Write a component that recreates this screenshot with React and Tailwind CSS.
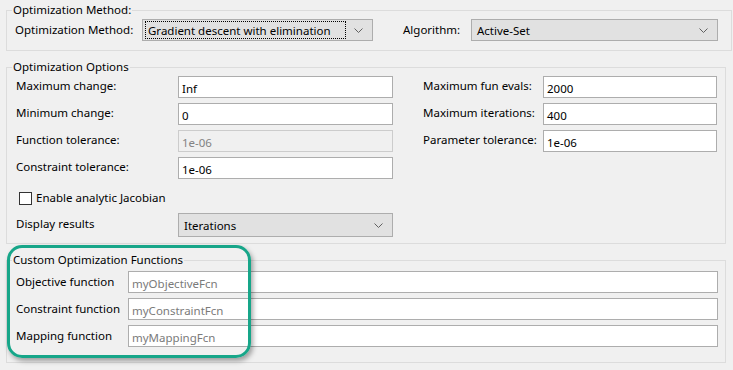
import React from 'react'

function Chevron() {
  return (
    <svg width="9" height="5" viewBox="0 0 9 5" className="shrink-0">
      <path d="M0.5 0.5 L4.5 4.5 L8.5 0.5" fill="none" stroke="#606060" strokeWidth="1" />
    </svg>
  )
}

function Combo({ value, width, focused = false }) {
  return (
    <div className={`flex h-[22px] ${width} items-center border border-[#adadad] bg-[#e1e1e1] pl-[2px] pr-[9px]`}>
      <div
        className={`flex h-[18px] flex-1 items-center pl-[2px] pt-px ${
          focused ? 'border border-dotted border-black' : 'border border-transparent'
        }`}
      >
        {value}
      </div>
      <div className="ml-[8px]">
        <Chevron />
      </div>
    </div>
  )
}

function Field({ value, width, disabled = false, muted = false }) {
  return (
    <div
      className={`flex h-[22px] ${width} items-center border px-[3px] pt-[3px] ${
        disabled ? 'border-[#cccccc] bg-[#f0f0f0] text-[#838383]' : 'border-[#adadad] bg-white'
      } ${muted ? 'text-[#7a7a7a]' : ''}`}
    >
      {value}
    </div>
  )
}

function Group({ title, className, children }) {
  return (
    <fieldset className={`border border-[#dcdcdc] ${className}`}>
      <legend className="ml-[5px] px-px leading-4">{title}</legend>
      {children}
    </fieldset>
  )
}

const leftRows = [
  { label: 'Maximum change:', value: 'Inf' },
  { label: 'Minimum change:', value: '0' },
  { label: 'Function tolerance:', value: '1e-06', disabled: true },
  { label: 'Constraint tolerance:', value: '1e-06' },
]

const rightRows = [
  { label: 'Maximum fun evals:', value: '2000' },
  { label: 'Maximum iterations:', value: '400' },
  { label: 'Parameter tolerance:', value: '1e-06' },
]

const customRows = [
  { label: 'Objective function', value: 'myObjectiveFcn' },
  { label: 'Constraint function', value: 'myConstraintFcn' },
  { label: 'Mapping function', value: 'myMappingFcn' },
]

export default function App() {
  return (
    <div
      className="relative h-[370px] w-[733px] overflow-hidden bg-[#f0f0f0] px-[6px] pt-[2px] text-[11.5px] text-black"
      style={{ fontFamily: '"Segoe UI", "Noto Sans", sans-serif' }}
    >
      <Group title="Optimization Method:" className="w-[726px] pb-[9px]">
        <div className="mt-px flex items-center pl-[8px]">
          <span className="w-[127px]">Optimization Method:</span>
          <Combo value="Gradient descent with elimination" width="w-[231px]" focused />
          <span className="ml-[30px] w-[68px]">Algorithm:</span>
          <Combo value="Active-Set" width="w-[247px]" />
        </div>
      </Group>

      <Group title="Optimization Options" className="mt-[8px] w-[720px] pb-[6px]">
        <div className="flex flex-col gap-[5px] pl-[9px] pt-px">
          {leftRows.map((row, i) => (
            <div key={row.label} className="flex items-center">
              <span className="-mt-[3px] w-[162px]">{row.label}</span>
              <Field value={row.value} width="w-[215px]" disabled={row.disabled} />
              {rightRows[i] && (
                <>
                  <span className="-mt-[3px] ml-[30px] w-[120px]">{rightRows[i].label}</span>
                  <Field value={rightRows[i].value} width="w-[174px]" />
                </>
              )}
            </div>
          ))}
        </div>
        <label className="mt-[11px] flex items-center gap-[4px] pl-[12px]">
          <span className="h-[13px] w-[13px] border border-[#333333] bg-white" />
          <span className="-mt-px">Enable analytic Jacobian</span>
        </label>
        <div className="mt-[7px] flex items-center pl-[9px]">
          <span className="-mt-[3px] w-[162px]">Display results</span>
          <Combo value="Iterations" width="w-[215px] h-[24px]" />
        </div>
      </Group>

      <Group title="Custom Optimization Functions" className="mt-[8px] w-[720px] pb-[15px]">
        <div className="flex flex-col gap-[5px] pl-[9px] pt-[3px]">
          {customRows.map((row) => (
            <div key={row.label} className="flex items-center">
              <span className="-mt-[2px] w-[112px]">{row.label}</span>
              <Field value={row.value} width="w-[590px]" muted />
            </div>
          ))}
        </div>
      </Group>

      <div className="pointer-events-none absolute left-[7px] top-[245px] h-[113px] w-[244px] rounded-[15px] border-[3px] border-[#17a689] shadow-[2px_3px_5px_rgba(0,0,0,0.35)]" />
    </div>
  )
}
